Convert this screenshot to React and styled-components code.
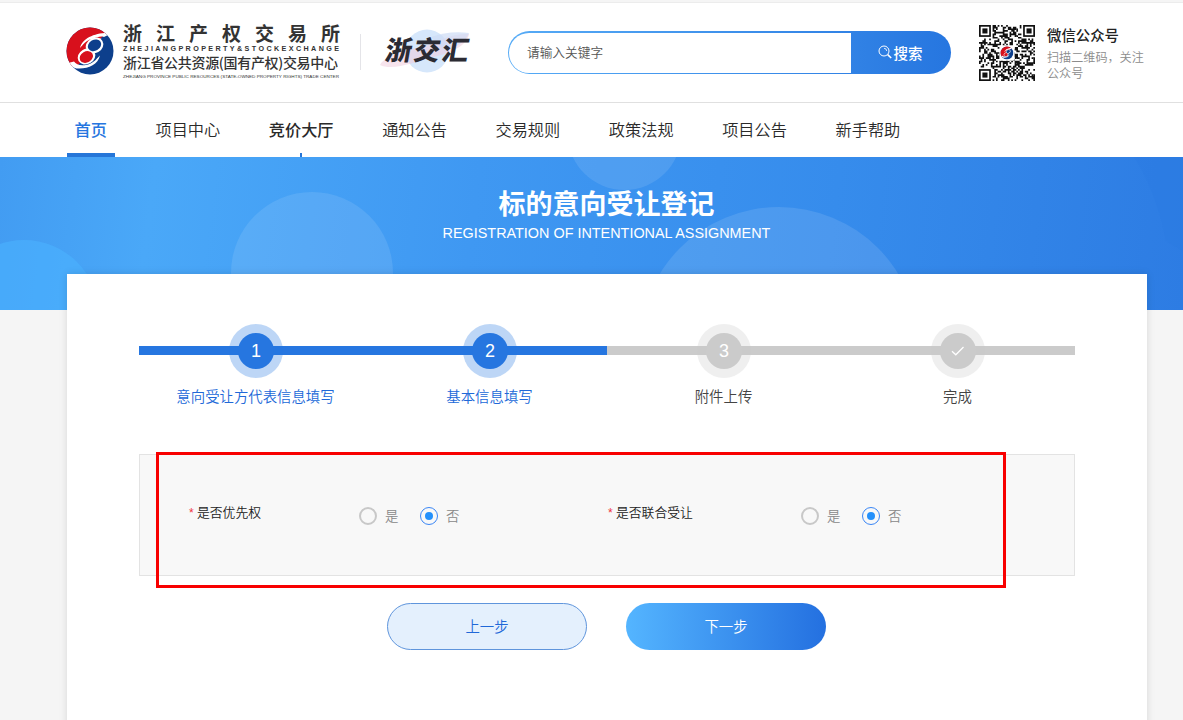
import { useState } from "react";
import styled, { createGlobalStyle } from "styled-components";

const GlobalStyle = createGlobalStyle`
  * {
    box-sizing: border-box;
  }
  body {
    margin: 0;
    background: #f5f5f5;
    font-family: "Noto Sans CJK SC", sans-serif;
    font-weight: 350;
    color: #333;
    overflow: hidden;
  }
  button,
  input {
    font-family: inherit;
    font-weight: inherit;
  }
`;

const Page = styled.div`
  height: 720px;
  overflow: hidden;
`;

const Header = styled.header`
  display: flex;
  align-items: flex-start;
  height: 101px;
  margin-top: 2px;
  padding: 18px 0 0 62px;
  background: #fff;
  border-top: 1px solid #ececec;
  border-bottom: 1px solid #e0e0e0;
`;

const LogoSvg = styled.svg`
  flex: none;
  margin-top: -10px;
`;

const Divider = styled.div`
  width: 1px;
  height: 36px;
  margin: 13px 18px 0 -2px;
  background: #e4e4e8;
`;

const Search = styled.form`
  display: flex;
  width: 443px;
  height: 43px;
  margin: 10px 0 0 35px;
  padding: 2px 0 1px 1px;
  border-radius: 22px;
  background: linear-gradient(90deg, #56abf6, #2676e0);
`;

const SearchInput = styled.input`
  width: 342px;
  border: 0;
  outline: 0;
  padding: 0 0 4px 18px;
  border-radius: 21px 0 0 21px;
  background: #fff;
  font-size: 12.7px;
  color: #555;
  &::placeholder {
    color: #555;
  }
`;

const SearchButton = styled.button`
  display: flex;
  flex: 1;
  align-items: center;
  justify-content: center;
  gap: 2px;
  border: 0;
  padding: 0 2px 2px 0;
  background: transparent;
  color: #fff;
  font-size: 14.5px;
  font-weight: 500;
`;

const Wechat = styled.div`
  display: flex;
  gap: 12px;
  margin: 4px 0 0 28px;
`;

const WechatTitle = styled.div`
  font-size: 14.4px;
  line-height: 20px;
  font-weight: 500;
  color: #222;
`;

const WechatText = styled.div`
  width: 100px;
  margin-top: 4px;
  font-size: 12.1px;
  line-height: 16px;
  color: #8c8c8c;
`;

const Nav = styled.nav`
  display: flex;
  gap: 32.6px;
  height: 54px;
  padding-left: 66.5px;
  background: #fff;
`;

const NavItem = styled.a`
  display: flex;
  flex-direction: column;
  align-items: center;
  justify-content: space-between;
  padding: 14px 8px 0;
  font-size: 16.2px;
  line-height: 24px;
  font-weight: ${(p) => (p.$bold ? 500 : 350)};
  color: ${(p) => (p.$active ? "#2676e0" : "#2a2a2a")};
`;

const NavBar = styled.span`
  width: ${(p) => p.$width}px;
  height: 4px;
  margin: 0 -8px;
  background: #2676d8;
`;

const Banner = styled.section`
  position: relative;
  height: 153px;
  padding-left: 67px;
  background: linear-gradient(97deg, #429cf2 0%, #4aa8f8 13%, #3f98f2 40%, #368cec 70%, #2d7ce3 100%);
`;

const BannerArt = styled.svg`
  position: absolute;
  left: 0;
  top: 0;
`;

const BannerText = styled.div`
  position: relative;
  width: 1079px;
  padding-top: 26px;
  text-align: center;
  color: #fff;
`;

const Title = styled.h1`
  margin: 0;
  font-size: 27px;
  line-height: 40px;
  font-weight: 700;
`;

const Subtitle = styled.div`
  margin-top: 1px;
  font-family: "Liberation Sans", sans-serif;
  font-size: 14.4px;
  line-height: 18px;
`;

const Card = styled.main`
  position: relative;
  width: 1080px;
  height: 500px;
  margin: -36px 0 0 67px;
  padding: 50px 72px 0;
  background: #fff;
  box-shadow: 0 0 8px rgba(0, 0, 0, 0.12);
`;

const Steps = styled.div`
  display: grid;
  grid-template-columns: repeat(4, 1fr);
`;

const Step = styled.div`
  display: flex;
  flex-direction: column;
  align-items: center;
  color: ${(p) => (p.$done ? "#2068d8" : "#444")};
`;

const StepTrack = styled.div`
  display: flex;
  justify-content: center;
  align-items: center;
  width: 100%;
  height: 54px;
  background: linear-gradient(${(p) => (p.$done ? "#2676e0, #2676e0" : "#cbcbcb, #cbcbcb")}) 0 22px / 100% 9px no-repeat;
`;

const StepDot = styled.div`
  display: flex;
  align-items: center;
  justify-content: center;
  width: 36px;
  height: 36px;
  border-radius: 50%;
  background: ${(p) => (p.$done ? "#2676e0" : "#cbcbcb")};
  box-shadow: 0 0 0 9px ${(p) => (p.$done ? "rgba(38, 118, 224, 0.3)" : "rgba(203, 203, 203, 0.3)")};
  color: #fff;
  font-family: "Liberation Sans", sans-serif;
  font-size: 18px;
`;

const StepLabel = styled.div`
  margin: 7px 1px 0 0;
  font-size: 14.4px;
  line-height: 22px;
`;

const FormPanel = styled.div`
  position: relative;
  display: flex;
  height: 122px;
  margin-top: 47px;
  padding: 45px 0 0 49px;
  background: #f8f8f8;
  border: 1px solid #e3e3e3;
`;

const Field = styled.div`
  display: flex;
  width: ${(p) => p.$width}px;
`;

const FieldLabel = styled.div`
  width: ${(p) => p.$width}px;
  font-size: 12.8px;
  line-height: 24px;
  color: #222;
`;

const Star = styled.span`
  display: inline-block;
  width: 8px;
  color: #f0333f;
  font-family: "Liberation Sans", sans-serif;
  font-size: 12px;
`;

const Radios = styled.div`
  display: flex;
  height: 20px;
  margin-top: 5px;
`;

const RadioLabel = styled.label`
  display: flex;
  align-items: center;
  gap: 8px;
  width: 61px;
  font-size: 13.4px;
  line-height: 18px;
  color: #888;
`;

const RadioMark = styled.span`
  display: flex;
  align-items: center;
  justify-content: center;
  width: 18px;
  height: 18px;
  margin-top: 2px;
  border: ${(p) => (p.$checked ? "1px solid #3a86f5" : "2px solid #c8c8c8")};
  border-radius: 50%;
  &::after {
    content: "";
    width: 8px;
    height: 8px;
    border-radius: 50%;
    background: ${(p) => (p.$checked ? "#2490fb" : "transparent")};
  }
`;

const Highlight = styled.div`
  position: absolute;
  left: 16px;
  top: -3px;
  width: 850px;
  height: 136px;
  border: 3px solid #f80000;
`;

const Actions = styled.div`
  display: flex;
  gap: 39px;
  margin: 27px 0 0 248px;
`;

const ActionButton = styled.button`
  width: 200px;
  height: 47px;
  padding: 0 0 3px;
  border: ${(p) => (p.$primary ? "0" : "1px solid #5f95dc")};
  border-radius: 24px;
  background: ${(p) => (p.$primary ? "linear-gradient(90deg, #54b5ff, #2470e0)" : "#e4f0fd")};
  color: ${(p) => (p.$primary ? "#fff" : "#2068d8")};
  font-size: 14.4px;
`;

const navItems = [
  { label: "首页", bold: true, active: true, bar: 48 },
  { label: "项目中心" },
  { label: "竞价大厅", bold: true, bar: 2 },
  { label: "通知公告" },
  { label: "交易规则" },
  { label: "政策法规" },
  { label: "项目公告" },
  { label: "新手帮助" },
];

const steps = [
  { label: "意向受让方代表信息填写", mark: "1", done: true },
  { label: "基本信息填写", mark: "2", done: true },
  { label: "附件上传", mark: "3" },
  { label: "完成", mark: <CheckIcon /> },
];

function CheckIcon() {
  return (
    <svg width="16" height="16" viewBox="0 0 16 16" fill="none" stroke="#fff" strokeWidth="1.3">
      <path d="M2 8.2l3.8 3.6L13.5 4" />
    </svg>
  );
}

function Emblem({ id }) {
  return (
    <g>
      <clipPath id={id}>
        <circle cx="28" cy="30" r="23.5" />
      </clipPath>
      <g clipPath={`url(#${id})`}>
        <rect x="4" y="6" width="48" height="48" fill="#0d3f8c" />
        <path d="M0 0h50v10L40 16 24 36 14 46 0 44z" fill="#d8101c" />
        {/* the two tails of the figure eight */}
        <path d="M48 12C34 11 20 17 18 27c3-3 6-8 12-9 5-2 9-3 12-2 2-1 4-2 6-4z" fill="#fff" />
        <path d="M6 42c2 3 6 5.500 10 5.500 10 .5 20-4 22-13-4 4-8 9-14 9.500-6 .8-10-.5-12-3.500z" fill="#fff" />
      </g>
      <ellipse cx="32.500" cy="24.500" rx="9.200" ry="7.600" transform="rotate(-30 32.500 24.500)" fill="#fff" />
      <ellipse cx="24.500" cy="35.500" rx="9.200" ry="7.600" transform="rotate(-30 24.500 35.500)" fill="#fff" />
      <ellipse cx="32.500" cy="24.300" rx="7" ry="5.500" transform="rotate(-30 32.500 24.300)" fill="#0d3f8c" />
      <ellipse cx="24.300" cy="36" rx="7" ry="5.500" transform="rotate(-30 24.300 36)" fill="#d8101c" />
    </g>
  );
}

function ExchangeLogo() {
  return (
    <LogoSvg width="300" height="76" viewBox="0 -10 300 76" fontFamily="'Noto Sans CJK SC', sans-serif" fill="#333">
      <Emblem id="emblem" />
      <text x="61" y="19.500" fontSize="19" fontWeight="700" letterSpacing="14">浙江产权交易所</text>
      <text x="61" y="30.200" fontSize="7.200" fontFamily="'Liberation Sans', sans-serif" fontWeight="700" textLength="216">ZHEJIANGPROPERTY&amp;STOCKEXCHANGE</text>
      <text x="61" y="47" fontSize="14" fontWeight="500" textLength="215">浙江省公共资源(国有产权)交易中心</text>
      <text x="61" y="57" fontSize="4" fontFamily="'Liberation Sans', sans-serif" fontWeight="400" textLength="216" lengthAdjust="spacingAndGlyphs">ZHEJIANG PROVINCE PUBLIC RESOURCES (STATE-OWNED PROPERTY RIGHTS) TRADE CENTER</text>
    </LogoSvg>
  );
}

function HubLogo() {
  return (
    <svg width="94" height="60" viewBox="0 0 94 60">
      <circle cx="48" cy="30" r="21.500" fill="#d6e7fb" />
      <path d="M1 44C8 32 30 29 46 25c14-4 22-12 44-12-2 12-18 19-36 23C36 41 14 50 1 44z" fill="#efc9dc" opacity=".5" />
      <path d="M52 16c12-4 24-6 38-4-3 9-13 14-24 18z" fill="#cddcf5" opacity=".7" />
      <text x="6" y="39" fontSize="26.500" fontWeight="900" fill="#2b2b33" fontFamily="'Noto Sans CJK SC', sans-serif" transform="translate(6 0) skewX(-10)" textLength="83">浙交汇</text>
    </svg>
  );
}

const QR_SIZE = 33;

function isFinder(x, y) {
  const near = (v) => v < 8 || v > QR_SIZE - 9;
  return near(x) && near(y) && !(x > 8 && y > 8);
}

function qrPath() {
  let seed = 20;
  let d = "";
  for (let y = 0; y < QR_SIZE; y++) {
    for (let x = 0; x < QR_SIZE; x++) {
      seed = (seed * 16807) % 2147483647;
      if (!isFinder(x, y) && seed % 100 < 51) d += `M${x} ${y}h1v1h-1z`;
    }
  }
  return d;
}

function QrCode() {
  return (
    <svg width="56" height="56" viewBox="0 0 33 33">
      <path d={qrPath()} fill="#111" />
      {[[0, 0], [26, 0], [0, 26]].map(([x, y]) => (
        <g key={`${x}-${y}`} transform={`translate(${x} ${y})`}>
          <rect x=".5" y=".5" width="6" height="6" fill="#fff" stroke="#111" />
          <rect x="2" y="2" width="3" height="3" fill="#111" />
        </g>
      ))}
      <rect x="12" y="12" width="9" height="9" rx="1" fill="#fff" />
      <g transform="translate(12 11.700) scale(.16)">
        <Emblem id="qr-emblem" />
      </g>
    </svg>
  );
}

function SearchIcon() {
  return (
    <svg width="14" height="14" viewBox="0 0 14 14" fill="none" stroke="#fff">
      <circle cx="6" cy="6" r="5" />
      <path d="M6 3.300A2.700 2.700 0 0 1 8.700 6" strokeWidth=".8" />
      <path d="M9.700 9.700l3.500 3.300" strokeWidth="1.700" />
    </svg>
  );
}

function RadioField({ label, width, labelWidth }) {
  const [value, setValue] = useState("否");
  return (
    <Field $width={width}>
      <FieldLabel $width={labelWidth}>
        <Star>*</Star>
        {label}
      </FieldLabel>
      <Radios>
        {["是", "否"].map((option) => (
          <RadioLabel key={option} onClick={() => setValue(option)}>
            <RadioMark $checked={value === option} />
            {option}
          </RadioLabel>
        ))}
      </Radios>
    </Field>
  );
}

export default function App() {
  return (
    <Page>
      <GlobalStyle />
      <Header>
        <ExchangeLogo />
        <Divider />
        <HubLogo />
        <Search>
          <SearchInput placeholder="请输入关键字" />
          <SearchButton type="button">
            <SearchIcon />
            搜索
          </SearchButton>
        </Search>
        <Wechat>
          <QrCode />
          <div>
            <WechatTitle>微信公众号</WechatTitle>
            <WechatText>扫描二维码，关注公众号</WechatText>
          </div>
        </Wechat>
      </Header>
      <Nav>
        {navItems.map((item) => (
          <NavItem key={item.label} $bold={item.bold} $active={item.active}>
            {item.label}
            {item.bar && <NavBar $width={item.bar} />}
          </NavItem>
        ))}
      </Nav>
      <Banner>
        <BannerArt width="1183" height="153" viewBox="0 0 1183 153">
          <circle cx="24" cy="158" r="75" fill="#4bb2ff" opacity=".6" />
          <circle cx="312" cy="116" r="81" fill="#fff" opacity=".1" />
          <circle cx="624.500" cy="-24" r="57" fill="#fff" opacity=".1" />
          <circle cx="779" cy="190" r="140" fill="#fff" opacity=".11" />
          <path d="M1134 0c14 22 26 52 32 84l17 10V0z" fill="#2678e0" opacity=".2" />
        </BannerArt>
        <BannerText>
          <Title>标的意向受让登记</Title>
          <Subtitle>REGISTRATION OF INTENTIONAL ASSIGNMENT</Subtitle>
        </BannerText>
      </Banner>
      <Card>
        <Steps>
          {steps.map((step) => (
            <Step key={step.label} $done={step.done}>
              <StepTrack $done={step.done}>
                <StepDot $done={step.done}>{step.mark}</StepDot>
              </StepTrack>
              <StepLabel>{step.label}</StepLabel>
            </Step>
          ))}
        </Steps>
        <FormPanel>
          <RadioField label="是否优先权" width={419} labelWidth={170} />
          <RadioField label="是否联合受让" width={400} labelWidth={193} />
          <Highlight />
        </FormPanel>
        <Actions>
          <ActionButton>上一步</ActionButton>
          <ActionButton $primary>下一步</ActionButton>
        </Actions>
      </Card>
    </Page>
  );
}
